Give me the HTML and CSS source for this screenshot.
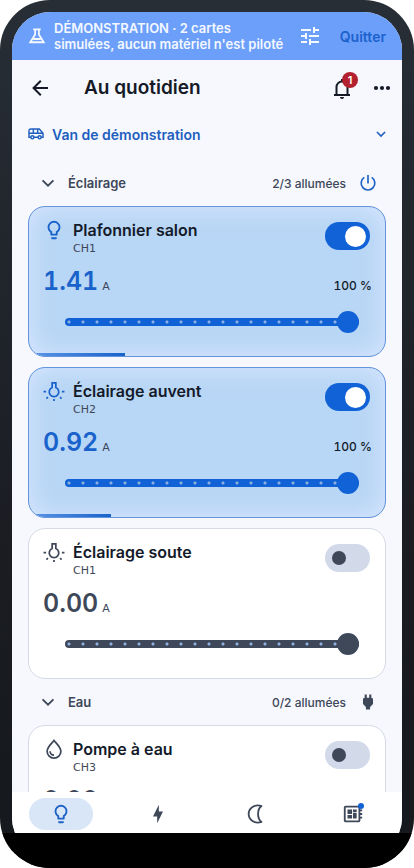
FILE: index.html
```html
<!DOCTYPE html>
<html lang="fr">
<head>
<meta charset="utf-8">
<meta name="viewport" content="width=device-width, initial-scale=1">
<title>Au quotidien</title>
<link rel="stylesheet" href="styles.css">
</head>
<body>
<svg class="defs" aria-hidden="true">
  <symbol id="bulb" viewBox="0 0 24 24"><path fill="currentColor" d="M12 2a7 7 0 0 1 7 7c0 2.38-1.19 4.47-3 5.74V17a1 1 0 0 1-1 1H9a1 1 0 0 1-1-1v-2.26C6.19 13.47 5 11.38 5 9a7 7 0 0 1 7-7M9 21v-1h6v1a1 1 0 0 1-1 1h-4a1 1 0 0 1-1-1m3-17a5 5 0 0 0-5 5c0 2.05 1.23 3.81 3 4.58V16h4v-2.42c1.77-.77 3-2.53 3-4.58a5 5 0 0 0-5-5z"/></symbol>
  <symbol id="lamp" viewBox="0 0 24 24"><path fill="none" stroke="currentColor" stroke-width="1.9" d="M10 3.200v5a5.200 5.200 0 1 0 4 0v-5zM.6 12.800h2.800M20.600 12.800h2.800M12 20.600v2.400M3.700 20.300l1.700-1.700M20.300 20.300l-1.700-1.700"/></symbol>
  <symbol id="chevron" viewBox="0 0 24 24"><path fill="none" stroke="currentColor" stroke-width="2.2" d="M5.500 8.800 12 15.200l6.500-6.400"/></symbol>
</svg>
<div class="phone">
  <div class="screen">
    <div class="banner">
      <svg class="i18" viewBox="0 0 24 24"><path fill="none" stroke="currentColor" stroke-width="2.400" d="M7 3.200h10M9.500 3.500v6.500L3 20.300h18L14.500 10V3.500M7 16h10"/></svg>
      <p class="banner-text">DÉMONSTRATION · 2 cartes simulées, aucun matériel n'est piloté</p>
      <button class="icon-btn" aria-label="Réglages"><svg class="i24" viewBox="0 0 24 24"><path fill="currentColor" d="M3 17v2h6v-2H3M3 5v2h10V5H3m10 16v-2h8v-2h-8v-2h-2v6h2M7 9v2H3v2h4v2h2V9H7m14 4v-2H11v2h10m-6-4h2V7h4V5h-4V3h-2v6z"/></svg></button>
      <button class="quit">Quitter</button>
    </div>
    <header class="appbar">
      <button class="icon-btn" aria-label="Retour"><svg class="i24" viewBox="0 0 24 24"><path fill="currentColor" d="M20 11v2H8l5.500 5.500-1.420 1.420L4.160 12l7.920-7.920L13.500 5.500 8 11z"/></svg></button>
      <h1>Au quotidien</h1>
      <button class="icon-btn bell" aria-label="Notifications"><svg class="i24" viewBox="0 0 24 24"><path fill="none" stroke="currentColor" stroke-width="2" d="M4 19h16M6.500 19v-8a5.500 5.500 0 0 1 11 0v8M12 3v3"/><path fill="currentColor" d="M10 21h4a2 2 0 0 1-4 0z"/></svg><span class="badge">1</span></button>
      <button class="icon-btn more" aria-label="Plus"><svg class="i24" viewBox="0 0 24 24"><g fill="currentColor"><circle cx="6" cy="12" r="2.100"/><circle cx="12" cy="12" r="2.100"/><circle cx="18" cy="12" r="2.100"/></g></svg></button>
    </header>
    <main class="content">
      <button class="vehicle">
        <svg class="i16" viewBox="0 0 24 24"><g fill="none" stroke="currentColor" stroke-width="2.200"><path d="M4 17H1.500V7A2.500 2.500 0 0 1 4 4.500h13l5.500 6.500v6H20M9 17h6M1.500 11H22M8 4.500V11M14.500 4.500V11"/><circle cx="6.500" cy="17" r="2.300"/><circle cx="17.500" cy="17" r="2.300"/></g></svg>
        <span>Van de démonstration</span>
        <svg class="i10" viewBox="4 4 16 16"><path fill="none" stroke="currentColor" stroke-width="2.600" d="M5.500 8.800 12 15.200l6.500-6.400"/></svg>
      </button>
      <section>
        <div class="group">
          <svg class="i20"><use href="#chevron"/></svg>
          <h2>Éclairage</h2>
          <span class="count">2/3 allumées</span>
          <button class="icon-btn accent" aria-label="Tout éteindre"><svg class="i20" viewBox="0 0 24 24"><path fill="none" stroke="currentColor" stroke-width="2" d="M12 2.500v10M7.600 5.300a8.200 8.200 0 1 0 8.800 0"/></svg></button>
        </div>
        <div class="cards">
          <article class="card on">
            <div class="head">
              <svg class="i22"><use href="#bulb"/></svg>
              <div class="names"><h3><label for="s1">Plafonnier salon</label></h3><p>CH1</p></div>
              <input class="switch" id="s1" type="checkbox" role="switch" checked>
            </div>
            <div class="reading"><strong>1.41</strong><span class="unit">A</span><span class="percent">100 %</span></div>
            <input class="slider" type="range" value="100" aria-label="Intensité Plafonnier salon">
            <div class="load" style="width:27%"></div>
          </article>
          <article class="card on">
            <div class="head">
              <svg class="i22"><use href="#lamp"/></svg>
              <div class="names"><h3><label for="s2">Éclairage auvent</label></h3><p>CH2</p></div>
              <input class="switch" id="s2" type="checkbox" role="switch" checked>
            </div>
            <div class="reading"><strong>0.92</strong><span class="unit">A</span><span class="percent">100 %</span></div>
            <input class="slider" type="range" value="100" aria-label="Intensité Éclairage auvent">
            <div class="load" style="width:23%"></div>
          </article>
          <article class="card">
            <div class="head">
              <svg class="i22"><use href="#lamp"/></svg>
              <div class="names"><h3><label for="s3">Éclairage soute</label></h3><p>CH1</p></div>
              <input class="switch" id="s3" type="checkbox" role="switch">
            </div>
            <div class="reading"><strong>0.00</strong><span class="unit">A</span></div>
            <input class="slider" type="range" value="100" aria-label="Intensité Éclairage soute">
          </article>
        </div>
      </section>
      <section>
        <div class="group">
          <svg class="i20"><use href="#chevron"/></svg>
          <h2>Eau</h2>
          <span class="count">0/2 allumées</span>
          <button class="icon-btn" aria-label="Tout allumer"><svg class="i20" viewBox="0 0 24 24"><path fill="currentColor" d="M16 7V3h-2.500v4h-3V3H8v4C7 7 6 8 6 9v5.500L9.500 18v3h5v-3l3.500-3.500V9c0-1-1-2-2-2z"/></svg></button>
        </div>
        <div class="cards">
          <article class="card">
            <div class="head">
              <svg class="i22" viewBox="0 0 24 24"><path fill="none" stroke="currentColor" stroke-width="1.900" d="M12 2.700C9.500 6 4.500 10 4.500 14.500a7.500 7.500 0 0 0 15 0C19.500 10 14.500 6 12 2.700zM7.700 14.500a4.300 4.300 0 0 0 4.300 4.200"/></svg>
              <div class="names"><h3><label for="s4">Pompe à eau</label></h3><p>CH3</p></div>
              <input class="switch" id="s4" type="checkbox" role="switch">
            </div>
            <div class="reading"><strong>0.00</strong><span class="unit">A</span></div>
          </article>
        </div>
      </section>
    </main>
    <nav class="tabs">
      <a class="active" href="#" aria-label="Quotidien"><svg class="i22"><use href="#bulb"/></svg></a>
      <a href="#" aria-label="Énergie"><svg class="i20" viewBox="0 0 24 24"><path fill="currentColor" d="M11 15H6l7-14v8h5l-7 14z"/></svg></a>
      <a href="#" aria-label="Nuit"><svg class="i22" viewBox="0 0 24 24"><path fill="none" stroke="currentColor" stroke-width="2" stroke-linejoin="round" d="M18 3.300c-7.500-2.300-14 2.200-14 8.700s6.500 11 14 8.700c-5-3.700-5-13.700 0-17.400z"/></svg></a>
      <a href="#" aria-label="Cartes"><svg class="i22" viewBox="0 0 24 24"><path fill="currentColor" d="M22 9V7h-2V5c0-1.100-.9-2-2-2H4c-1.100 0-2 .9-2 2v14c0 1.100.9 2 2 2h14c1.100 0 2-.9 2-2v-2h2v-2h-2v-2h2v-2h-2V9h2zm-4 10H4V5h14v14zM6 13h5v4H6zm6-6h4v3h-4zM6 7h5v5H6zm6 4h4v6h-4z"/></svg><span class="dot"></span></a>
    </nav>
  </div>
  <div class="system-bar"></div>
</div>
</body>
</html>
```
FILE: styles.css
```css
* { box-sizing: border-box; }
body, h1, h2, h3, p { margin: 0; }
body {
  background: #fff;
  color: #151a26;
  font-family: Inter, "Liberation Sans", sans-serif;
}
button { border: 0; padding: 0; background: none; color: inherit; font: inherit; cursor: pointer; }
svg { display: block; flex: none; }
.defs { position: absolute; width: 0; height: 0; }
.i10 { width: 10px; height: 10px; }
.i16 { width: 16px; height: 16px; }
.i18 { width: 18px; height: 18px; }
.i20 { width: 20px; height: 20px; }
.i22 { width: 22px; height: 22px; }
.i24 { width: 24px; height: 24px; }

.phone {
  position: relative;
  height: 100vh;
  padding: 12px;
  border-radius: 50px;
  background: linear-gradient(#272e36, #1b1d23 60%, #15181d);
  overflow: hidden;
}
.screen {
  display: flex;
  flex-direction: column;
  height: 100%;
  border-radius: 38px;
  background: #f6f8fd;
  overflow: hidden;
}
.system-bar { position: absolute; left: 0; right: 0; bottom: 0; height: 35px; background: #000; }

.banner {
  display: flex;
  align-items: center;
  flex: none;
  padding: 8px 16px;
  background: #6c9ffa;
  color: #f4f8ff;
}
.banner-text { flex: 1; margin: 0 4px 0 8px; font-size: 13px; line-height: 16px; font-weight: 600; text-wrap: balance; }
.quit { margin-left: 18px; font-size: 14px; font-weight: 600; color: #1c62cd; }
.icon-btn { display: flex; align-items: center; justify-content: center; }

.appbar { display: flex; align-items: center; flex: none; height: 56px; padding: 0 8px 0 16px; }
h1 { flex: 1; margin-left: 32px; font-size: 19px; line-height: 28px; font-weight: 600; }
.bell { position: relative; }
.more { margin-left: 16px; }
.badge {
  position: absolute;
  top: -4px;
  right: -4px;
  width: 16px;
  height: 16px;
  border-radius: 50%;
  background: #b3202f;
  color: #fff;
  font-size: 11px;
  line-height: 16px;
  font-weight: 600;
  text-align: center;
}

.content { flex: 1; min-height: 0; padding: 0 16px; overflow: hidden; }
.vehicle {
  display: flex;
  align-items: center;
  gap: 8px;
  width: 100%;
  height: 36px;
  margin-bottom: 8px;
  font-size: 14px;
  font-weight: 600;
  text-align: left;
  color: #1f5fbf;
}
.vehicle span { flex: 1; }

.group { display: flex; align-items: center; height: 46px; padding: 0 7px 0 10px; color: #3d4759; }
h2 { flex: 1; margin-left: 10px; font-size: 13px; line-height: 18px; font-weight: 600; }
.count { margin-right: 11px; font-size: 12px; font-weight: 500; }
.group .icon-btn { width: 22px; }
.accent { color: #1f62c6; }

.cards { display: grid; gap: 10px; }
.card {
  position: relative;
  padding: 12px 13px 20px 14px;
  border: 1px solid #d5dae4;
  border-radius: 17px;
  background: #fff;
  color: #3e4859;
  overflow: hidden;
}
.card.on {
  border-color: #6494dc;
  background: #b8d6f5;
  box-shadow: inset 0 0 26px #dae7ff;
  color: #1a62cb;
}
.head { display: flex; align-items: flex-start; }
.names { flex: 1; margin-left: 8px; }
h3 { font-size: 16px; line-height: 22px; font-weight: 600; color: #131a2a; }
.names p, .unit { font-family: "DejaVu Sans", sans-serif; font-size: 11px; font-weight: 400; color: #3d4759; }
.names p { line-height: 15px; }
.reading {
  display: flex;
  align-items: baseline;
  height: 32px;
  margin-top: 9px;
  line-height: 32px;
  font-variant-numeric: tabular-nums;
}
.reading strong { font-size: 25px; font-weight: 600; }
.unit { margin-left: 4px; }
.percent { margin-left: auto; font-size: 12px; font-weight: 500; color: #131a2a; }

.switch {
  appearance: none;
  display: flex;
  align-items: center;
  width: 45px;
  height: 28px;
  margin: 3px 2px 0 0;
  border-radius: 14px;
  background: #d2daea;
}
.switch::before { content: ""; width: 14px; height: 14px; margin-left: 7px; border-radius: 50%; background: #3e4859; }
.switch:checked { background: #1062d6; }
.switch:checked::before { width: 21px; height: 21px; margin-left: 20px; background: #fff; }

.slider {
  appearance: none;
  display: block;
  width: calc(100% - 35px);
  height: 28px;
  margin: 11px 13px 0 22px;
  background: none;
  color: #3e4859;
}
.on .slider { color: #1062d6; }
.slider::-webkit-slider-runnable-track {
  height: 8px;
  border-radius: 4px;
  background: radial-gradient(circle at 4px 4px, #8fb0df 1px, transparent 2px) 0 0 / 14px 8px, currentColor;
}
.slider::-webkit-slider-thumb {
  appearance: none;
  width: 22px;
  height: 22px;
  margin-top: -7px;
  border-radius: 50%;
  background: currentColor;
}
.load { position: absolute; left: 0; bottom: 0; height: 3px; background: linear-gradient(90deg, #5b96e6, #1a62cb); }

.tabs { display: grid; grid-template-columns: repeat(4, 1fr); flex: none; height: 64px; padding-top: 6px; background: #fff; }
.tabs a {
  position: relative;
  display: flex;
  align-items: center;
  justify-content: center;
  justify-self: center;
  width: 64px;
  height: 32px;
  border-radius: 16px;
  color: #3e4859;
}
.tabs .active { background: #d8e6f7; color: #1f62c6; }
.dot { position: absolute; top: 5px; right: 21px; width: 6px; height: 6px; border-radius: 50%; background: #1062d6; }
```
